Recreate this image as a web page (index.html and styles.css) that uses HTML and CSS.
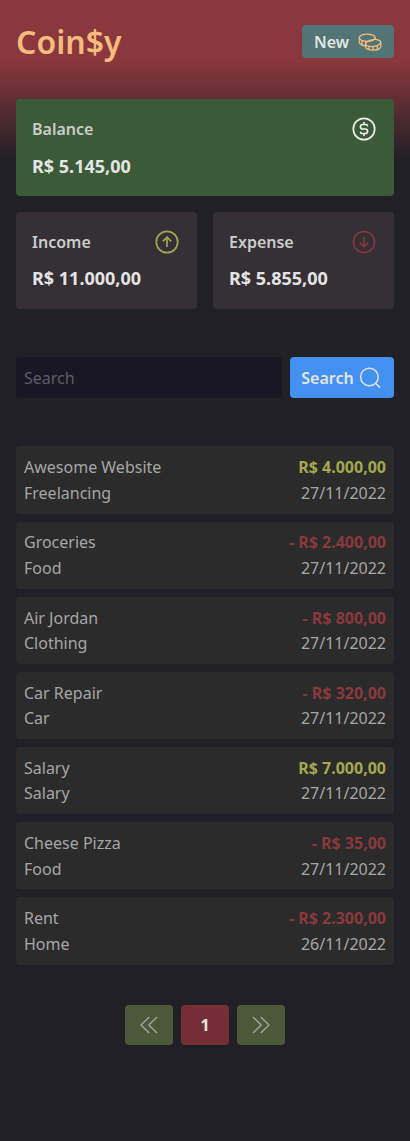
FILE: index.html
```html
<!DOCTYPE html>
<html lang="en">
<head>
<meta charset="utf-8">
<title>Coin$y</title>
<link rel="stylesheet" href="styles.css">
</head>
<body>
<header class="header">
  <h1 class="logo">Coin$y</h1>
  <button class="new-btn"><span class="label">New</span>
    <svg class="coins" viewBox="0 0 24 20" fill="none" stroke="currentColor" stroke-width="1.3">
      <ellipse cx="9.2" cy="5.8" rx="8" ry="3.7"/>
      <path d="M1.2 5.8v4c0 2.2 3 4 7.2 4M17.2 5.8v1.8M4 8.9v4M7.6 9.6v4"/>
      <ellipse cx="15.2" cy="11" rx="7.6" ry="3.5" transform="rotate(-8 15.2 11)"/>
      <path d="M7.6 11.8v3c0 2 3.4 3.4 7.6 3.4s7.6-1.7 7.6-3.7v-4M11 14.2v3.4M15.2 14.6v3.4M19.4 13.8v3.6"/>
    </svg>
  </button>
</header>
<main class="main">
  <section class="summary">
    <article class="card balance">
      <div class="card-head"><h2>Balance</h2>
        <svg class="icon" viewBox="0 0 28 28" fill="none" stroke="currentColor" stroke-width="1.7" stroke-linecap="round" stroke-linejoin="round"><circle cx="14" cy="14" r="10.7"/><path d="M14 7.7v1.8M14 18.5v1.8M17.4 10.6a1.2 1.2 0 0 0-1.2-1.1h-3.5a2.25 2.25 0 0 0 0 4.5h2.6a2.25 2.25 0 0 1 0 4.5h-3.5a1.2 1.2 0 0 1-1.2-1.1"/></svg>
      </div>
      <strong class="total">R$ 5.145,00</strong>
    </article>
    <article class="card">
      <div class="card-head"><h2>Income</h2>
        <svg class="icon income" viewBox="0 0 28 28" fill="none" stroke="currentColor" stroke-width="1.7"><circle cx="14" cy="14" r="10.7"/><path d="M14 19V9.7M9.8 13.4 14 9.2l4.2 4.2"/></svg>
      </div>
      <strong class="total">R$ 11.000,00</strong>
    </article>
    <article class="card">
      <div class="card-head"><h2>Expense</h2>
        <svg class="icon expense" viewBox="0 0 28 28" fill="none" stroke="currentColor" stroke-width="1.5"><circle cx="14" cy="14" r="10.6"/><path d="M14 9v9.3M9.8 14.6l4.2 4.2 4.2-4.2"/></svg>
      </div>
      <strong class="total">R$ 5.855,00</strong>
    </article>
  </section>
  <form class="search">
    <input class="search-input" type="text" placeholder="Search">
    <button class="search-btn" type="button"><span class="label">Search</span>
      <svg class="glass" viewBox="0 0 24 24" fill="none" stroke="currentColor" stroke-width="1.5"><circle cx="10.4" cy="11" r="8.8"/><path d="m16.6 17.2 4.4 4.4"/></svg>
    </button>
  </form>
  <ul class="list">
    <li class="item"><span>Awesome Website</span><b class="income">R$ 4.000,00</b><span>Freelancing</span><time>27/11/2022</time></li>
    <li class="item"><span>Groceries</span><b class="expense">- R$ 2.400,00</b><span>Food</span><time>27/11/2022</time></li>
    <li class="item"><span>Air Jordan</span><b class="expense">- R$ 800,00</b><span>Clothing</span><time>27/11/2022</time></li>
    <li class="item"><span>Car Repair</span><b class="expense">- R$ 320,00</b><span>Car</span><time>27/11/2022</time></li>
    <li class="item"><span>Salary</span><b class="income">R$ 7.000,00</b><span>Salary</span><time>27/11/2022</time></li>
    <li class="item"><span>Cheese Pizza</span><b class="expense">- R$ 35,00</b><span>Food</span><time>27/11/2022</time></li>
    <li class="item"><span>Rent</span><b class="expense">- R$ 2.300,00</b><span>Home</span><time>26/11/2022</time></li>
  </ul>
  <nav class="pages">
    <button class="page"><svg class="chevrons" viewBox="0 0 24 24" fill="none" stroke="currentColor" stroke-width="1.3"><path d="M12.2 4 4 12l8.2 8M20 4l-8.2 8 8.2 8"/></svg></button>
    <button class="page current">1</button>
    <button class="page"><svg class="chevrons" viewBox="0 0 24 24" fill="none" stroke="currentColor" stroke-width="1.3"><path d="m4 4 8.2 8L4 20M11.8 4l8.2 8-8.2 8"/></svg></button>
  </nav>
</main>
</body>
</html>
```
FILE: styles.css
```css
* { box-sizing: border-box; margin: 0; padding: 0; }
body {
  min-height: 1141px;
  padding: 0 16px;
  background: #212026 linear-gradient(#8a383d 0, #8a383d 60px, #212026 160px) no-repeat;
  color: #a6a6a6;
  font: 16px/1.6 "Noto Sans", sans-serif;
}
button, input { font: inherit; border: 0; border-radius: 4px; }
.header { display: flex; justify-content: space-between; align-items: center; height: 83.2px; }
.logo { color: #f4bc7d; font-size: 32px; font-weight: 600; line-height: 51px; }
.new-btn {
  display: flex; align-items: center; justify-content: space-between;
  width: 92px; height: 33px; padding: 0 12px;
  background: #527474; color: #e4e4e4; font-weight: 600;
}
.label { padding-top: 2px; }
.coins { width: 24px; height: 20px; color: #f4bc7d; }
.summary { display: grid; grid-template-columns: 1fr 1fr; gap: 16px; padding-top: 16px; }
.card { display: grid; gap: 8px; height: 96.8px; padding: 16px; border-radius: 4px; background: #352f36; }
.balance { grid-column: 1 / -1; background: #3b5a37; color: #eee; }
.card-head { display: flex; justify-content: space-between; align-items: center; height: 28px; }
.card-head h2 { padding-top: 1px; color: #ccc; font-size: 16px; font-weight: 600; }
.icon { width: 28px; height: 28px; }
.total { color: #e4e4e4; font-size: 18px; line-height: 28.8px; font-weight: 700; }
.balance .total { padding-top: 1px; }
.income { color: #a3a84e; }
.expense { color: #8a383d; }
.search { display: flex; gap: 8px; margin: 48px 0; height: 41.6px; }
.search-input { flex: 1; min-width: 0; padding: 9px 8px 7px; background: #1a1725; color: #ccc; }
.search-input::placeholder { color: #5e5c63; opacity: 1; }
.search-btn {
  display: flex; align-items: center; justify-content: center; gap: 5px;
  width: 104px; background: #4392f1; color: #e4e4e4; font-weight: 600;
}
.glass { width: 24px; height: 24px; }
.list { display: grid; gap: 8px; list-style: none; }
.item {
  display: grid; grid-template-columns: 1fr auto;
  padding: 8.8px 8px 7.2px; border-radius: 4px; background: #2b2b2b;
}
.item > :nth-child(even) { text-align: right; }
.pages { display: flex; justify-content: center; gap: 8px; margin-top: 40px; }
.page {
  display: flex; align-items: center; justify-content: center;
  width: 48px; height: 40px; background: #4c5938; color: #a6a6a6;
}
.current { padding-top: 2px; background: #742f36; color: #e4e4e4; font-weight: 700; }
.chevrons { width: 24px; height: 24px; }
```
